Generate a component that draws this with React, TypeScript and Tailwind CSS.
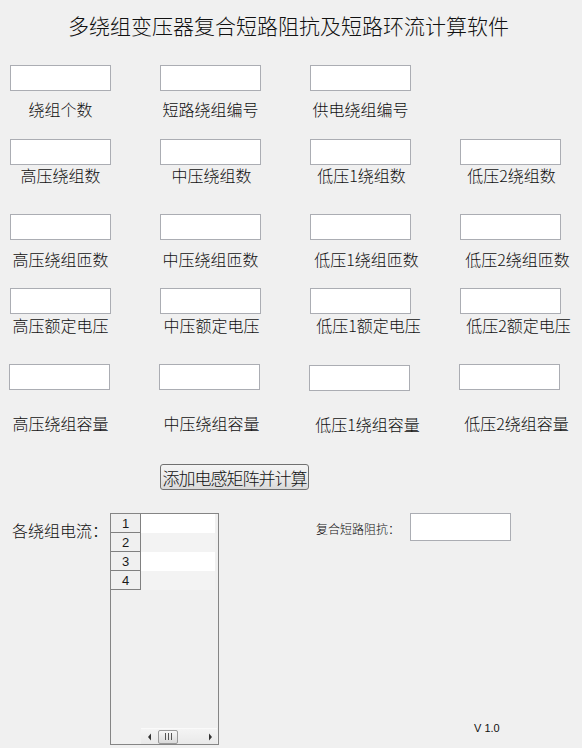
import React from "react";

type Cell = { label: string; dx: number };

const Field = ({ label, dx, labelMt, boxMl = 0, boxMt = 0 }: { label: string; dx: number; labelMt: string; boxMl?: number; boxMt?: number }) => (
  <div className="flex flex-col w-[150px] shrink-0">
    <div
      className="w-[101px] h-[26px] bg-white border border-[#abadb3]"
      style={{ marginLeft: boxMl, marginTop: boxMt }}
    />
    <div className={`flex justify-center w-[101px] ${labelMt}`} style={{ marginLeft: dx + boxMl }}>
      <span className="whitespace-nowrap text-[16px] leading-[16px] text-[#111]">{label}</span>
    </div>
  </div>
);

const Row = ({ cells, labelMt, mt, boxMl = 0, boxMts = [] }: { cells: Cell[]; labelMt: string; mt: string; boxMl?: number; boxMts?: number[] }) => (
  <div className={`flex pl-[10px] ${mt}`}>
    {cells.map((c, i) => (
      <Field key={i} label={c.label} dx={c.dx} labelMt={labelMt} boxMl={boxMl} boxMt={boxMts[i] ?? 0} />
    ))}
  </div>
);

export default function App() {
  const rows = [1, 2, 3, 4];
  return (
    <div className="w-[582px] h-[748px] bg-[#f0f0f0] overflow-hidden flex flex-col font-['Noto_Sans_CJK_SC','Noto_Sans_CJK_JP',sans-serif] font-light text-[#111]">
      <div className="pt-[15px] pl-[68px] text-[21px] leading-[21px] whitespace-nowrap">
        多绕组变压器复合短路阻抗及短路环流计算软件
      </div>

      <Row
        mt="mt-[29px]"
        labelMt="mt-[10px]"
        cells={[
          { label: "绕组个数", dx: 0 },
          { label: "短路绕组编号", dx: 0 },
          { label: "供电绕组编号", dx: 0 },
        ]}
      />
      <Row
        mt="mt-[22px]"
        labelMt="mt-[2px]"
        cells={[
          { label: "高压绕组数", dx: 0 },
          { label: "中压绕组数", dx: 1 },
          { label: "低压1绕组数", dx: 1 },
          { label: "低压2绕组数", dx: 1 },
        ]}
      />
      <Row
        mt="mt-[31px]"
        labelMt="mt-[11px]"
        cells={[
          { label: "高压绕组匝数", dx: 0 },
          { label: "中压绕组匝数", dx: 0 },
          { label: "低压1绕组匝数", dx: 6 },
          { label: "低压2绕组匝数", dx: 7 },
        ]}
      />
      <Row
        mt="mt-[21px]"
        labelMt="mt-[3px]"
        cells={[
          { label: "高压额定电压", dx: 0 },
          { label: "中压额定电压", dx: 1 },
          { label: "低压1额定电压", dx: 8 },
          { label: "低压2额定电压", dx: 8 },
        ]}
      />
      <Row
        mt="mt-[31px]"
        labelMt="mt-[25px]"
        boxMl={-1}
        boxMts={[0, 0, 1, 0]}
        cells={[
          { label: "高压绕组容量", dx: 1 },
          { label: "中压绕组容量", dx: 2 },
          { label: "低压1绕组容量", dx: 8 },
          { label: "低压2绕组容量", dx: 7 },
        ]}
      />

      <div className="mt-[32px] ml-[160px]">
        <button className="w-[149px] h-[26px] rounded-[3px] border border-[#707070] bg-gradient-to-b from-[#f4f4f4] via-[#ebebeb] to-[#d9d9d9] flex items-center justify-center p-0">
          <span className="text-[17px] leading-[17px] tracking-[-1px] whitespace-nowrap text-[#111]">添加电感矩阵并计算</span>
        </button>
      </div>

      <div className="mt-[23px] flex">
        <div className="w-[110px] shrink-0 pl-[12px] pt-[5px]">
          <span className="text-[16px] leading-[16px] whitespace-nowrap">各绕组电流：</span>
        </div>

        <div className="w-[109px] h-[232px] shrink-0 border border-[#858585] bg-[#f0f0f0] flex flex-col">
          {rows.map((n) => (
            <div key={n} className="flex h-[19px]">
              <div className="w-[30px] h-[19px] border-r border-b border-[#808080] bg-[#f0f0f0] flex items-center justify-center">
                <span className="text-[13px] leading-[13px] font-['Liberation_Sans',sans-serif] font-normal text-[#1a1a1a]">{n}</span>
              </div>
              <div className={`w-[74px] h-[19px] ${n % 2 === 1 ? "bg-white" : "bg-[#f3f3f3]"}`} />
            </div>
          ))}
          <div className="flex-1" />
          <div className="ml-[30px] mr-[1px] h-[16px] flex items-center border-t border-[#fafafa] bg-gradient-to-b from-[#f4f4f4] to-[#e9e9e9]">
            <svg width="8" height="16" viewBox="0 0 8 16" className="ml-[5px]">
              <path d="M5 4.5 L2 8 L5 11.5 Z" fill="#333" />
            </svg>
            <div className="ml-[4px] w-[20px] h-[14px] rounded-[2px] border border-[#9a9a9a] bg-gradient-to-b from-[#f7f7f7] to-[#dadada] flex items-center justify-center gap-[2px]">
              <div className="w-[1px] h-[7px] bg-[#555]" />
              <div className="w-[1px] h-[7px] bg-[#555]" />
              <div className="w-[1px] h-[7px] bg-[#555]" />
            </div>
            <div className="flex-1" />
            <svg width="8" height="16" viewBox="0 0 8 16" className="mr-[3px]">
              <path d="M3 4.5 L6 8 L3 11.5 Z" fill="#333" />
            </svg>
          </div>
        </div>

        <div className="flex flex-col">
          <div className="flex items-start">
            <span className="ml-[97px] mt-[10px] text-[12px] leading-[12px] whitespace-nowrap">复合短路阻抗：</span>
            <div className="ml-[10px] w-[101px] h-[28px] bg-white border border-[#abadb3]" />
          </div>
          <div className="mt-[182px] ml-[255px] text-[11px] leading-[11px] font-['Liberation_Sans',sans-serif] font-normal whitespace-nowrap text-[#111]">
            V 1.0
          </div>
        </div>
      </div>
    </div>
  );
}
